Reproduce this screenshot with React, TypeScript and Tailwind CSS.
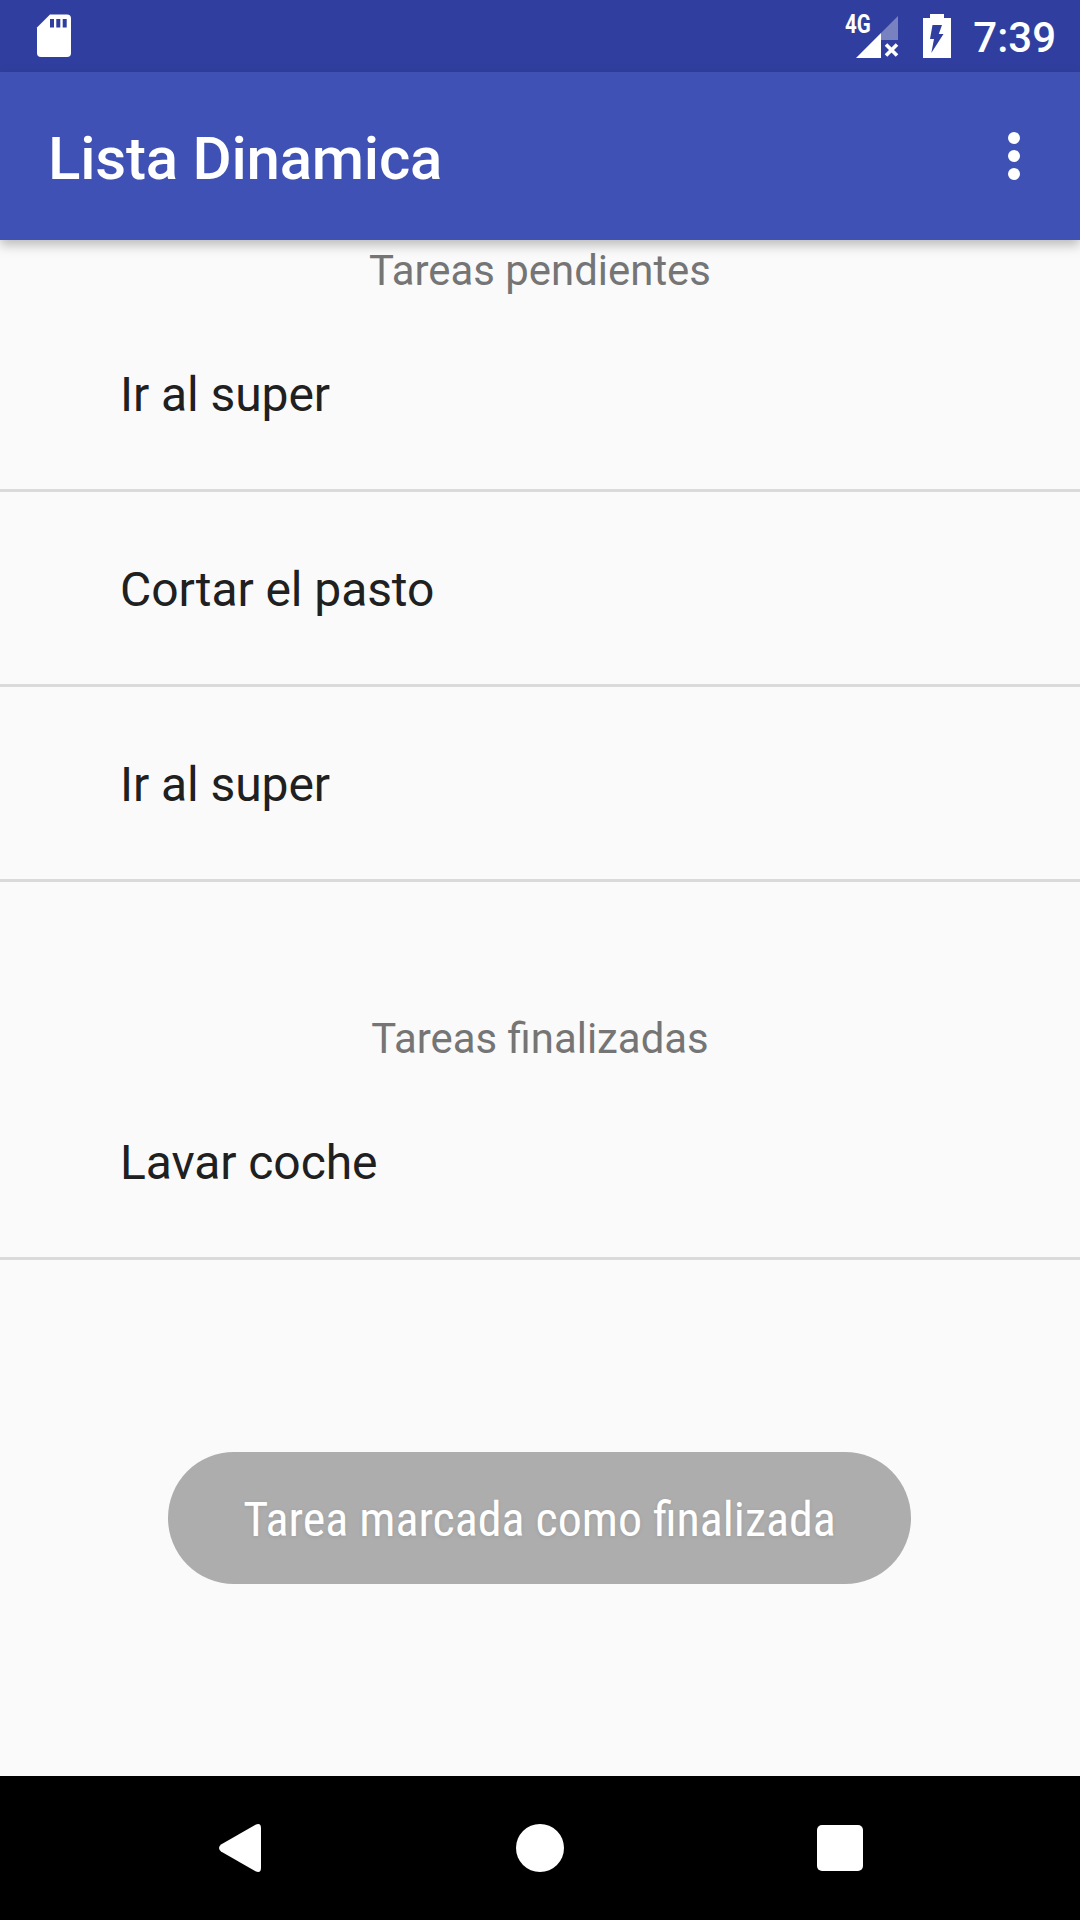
const Row = ({ children }: { children: string }) => (
  <div className="h-[195px] border-b-[3px] border-[#dadada] pl-[120px] pt-[70px] text-[48px] leading-[56px] tracking-[-0.08px] text-[#202020]">
    {children}
  </div>
);

const SectionTitle = ({ children }: { children: string }) => (
  <h2 className="text-center text-[41.9px] leading-[50px] text-[#757575]">{children}</h2>
);

function StatusBar() {
  return (
    <header className="flex h-[72px] shrink-0 items-start bg-[#303f9f] text-white">
      <svg className="mt-[14px] ml-[36px] h-[44px] w-[36px]" viewBox="0 0 36 44">
        <path fill="#fff" d="M14 .5h17a4 4 0 0 1 4 4v34.500a4 4 0 0 1-4 4H5a4 4 0 0 1-4-4V13.500z" />
        <path fill="#303f9f" d="M14 5h4v8.500h-4zM20.300 5h4v8.500h-4zM26.700 5h4v8.500h-4z" />
      </svg>
      <div className="relative mt-[12px] ml-auto h-[48px] w-[56px]">
        <span className="absolute top-0 left-0 origin-left scale-x-[0.82] text-[25px] leading-[26px] font-bold">4G</span>
        <svg className="absolute top-0 left-0 h-[48px] w-[56px]" viewBox="0 0 56 48">
          <path fill="#fff" fillOpacity=".35" d="M53 4v24H36V21z" />
          <path fill="#fff" d="M11 46L36 21v25z" />
          <path stroke="#fff" strokeWidth="3.6" d="M41 32.500l11 11M52 32.500L41 43.500" />
        </svg>
      </div>
      <svg className="mt-[14px] ml-[21px] h-[44px] w-[30px]" viewBox="0 0 30 44">
        <path fill="#fff" d="M8 0h14v4h7v40H1V4h7z" />
        <path fill="#303f9f" d="M10.500 11h9.500l-3.200 9h4.700L9.300 39l2.700-14H8z" />
      </svg>
      <time className="mt-[13px] mr-[24px] ml-[21px] text-[42px] leading-[49px] font-medium">7:39</time>
    </header>
  );
}

function AppBar() {
  return (
    <div className="z-10 flex h-[168px] shrink-0 items-center justify-between bg-[#3f51b5] pl-[48px] text-white shadow-[0_5px_11px_rgba(0,0,0,0.26)]">
      <h1 className="pt-[6px] text-[60px] font-medium tracking-[-0.22px]">Lista Dinamica</h1>
      <button aria-label="Más opciones" className="mr-[60px] mb-[24px] flex flex-col gap-[6px] pt-[24px]">
        <i className="size-[12px] rounded-full bg-white" />
        <i className="size-[12px] rounded-full bg-white" />
        <i className="size-[12px] rounded-full bg-white" />
      </button>
    </div>
  );
}

export default function App() {
  return (
    <div className="relative flex h-[1920px] w-[1080px] flex-col overflow-hidden bg-[#fafafa] font-['Roboto',sans-serif]">
      <StatusBar />
      <AppBar />
      <main className="flex-1 pt-[6px]">
        <SectionTitle>Tareas pendientes</SectionTitle>
        <div className="mt-[1px]">
          <Row>Ir al super</Row>
          <Row>Cortar el pasto</Row>
          <Row>Ir al super</Row>
        </div>
        <div className="mt-[132px]">
          <SectionTitle>Tareas finalizadas</SectionTitle>
          <div className="mt-[1px]">
            <Row>Lavar coche</Row>
          </div>
        </div>
      </main>
      <div className="absolute top-[1452px] left-[168px] flex h-[132px] w-[743px] items-center justify-center rounded-full bg-[#adadad]">
        <span className="pt-[4px] font-['Roboto_Condensed','Roboto',sans-serif] text-[48px] whitespace-nowrap text-white [font-stretch:75%] [text-shadow:0_1px_4px_rgba(0,0,0,0.09)]">
          Tarea marcada como finalizada
        </span>
      </div>
      <nav className="flex h-[144px] shrink-0 items-center justify-between bg-black pr-[217px] pl-[219px]">
        <svg className="h-[48px] w-[42px]" viewBox="0 0 42 48">
          <path fill="#fff" d="M36.500.7Q42-1.500 42 4v40q0 5.500-5.500 3.300L2 27.500Q-2 24 2 20.500z" />
        </svg>
        <i className="ml-[1px] size-[48px] rounded-full bg-white" />
        <i className="size-[46px] rounded-[5px] bg-white" />
      </nav>
    </div>
  );
}
